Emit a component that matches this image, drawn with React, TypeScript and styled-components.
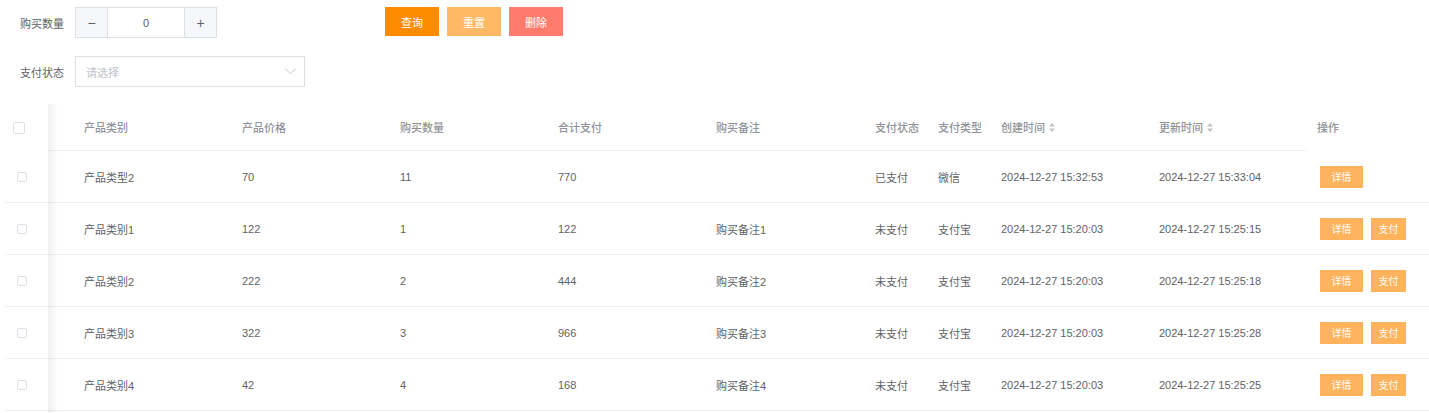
import styled, { createGlobalStyle } from 'styled-components'

const GlobalStyle = createGlobalStyle`
    html, body {
        margin: 0;
        padding: 0;
        background: #ffffff;
        overflow: hidden;
    }
    body {
        font-family: "Liberation Sans", "Noto Sans CJK SC", sans-serif;
        font-size: 11px;
        color: #606266;
    }
`

const Page = styled.div`
    width: 1429px;
    height: 413px;
    overflow: hidden;
`

const Form = styled.div`
    display: flex;
    flex-direction: column;
    gap: 18px;
    padding: 7px 0 0 20px;
`

const FormRow = styled.div`
    display: flex;
    align-items: flex-start;
`

const Field = styled.div`
    display: flex;
    align-items: center;
    height: 31px;
`

const Label = styled.label`
    width: 55px;
    color: #606266;
    font-size: 11px;
`

const NumberBox = styled.div`
    display: flex;
    width: 142px;
    height: 31px;
    box-sizing: border-box;
    border: 1px solid #dcdfe6;
    background: #ffffff;
`

const StepButton = styled.span<{ $side: 'left' | 'right' }>`
    width: 31px;
    display: flex;
    align-items: center;
    justify-content: center;
    background: #f5f7fa;
    color: #606266;
    font-size: 14px;
    ${p => p.$side === 'left' ? 'border-right: 1px solid #dcdfe6;' : 'border-left: 1px solid #dcdfe6;'}
`

const NumberValue = styled.span`
    flex: 1;
    display: flex;
    align-items: center;
    justify-content: center;
    color: #606266;
    font-size: 11px;
`

const Actions = styled.div`
    display: flex;
    gap: 8px;
    margin-left: 168px;
`

const ActionButton = styled.button<{ $color: string }>`
    width: 54px;
    height: 29px;
    border: none;
    background: ${p => p.$color};
    color: #ffffff;
    font-family: inherit;
    font-size: 11px;
    padding: 0;
    cursor: pointer;
`

const SelectBox = styled.div`
    width: 230px;
    height: 31px;
    box-sizing: border-box;
    border: 1px solid #dcdfe6;
    display: flex;
    align-items: center;
    justify-content: space-between;
    padding: 0 8px 0 10px;
    color: #c0c4cc;
    font-size: 11px;
`

const Table = styled.div`
    position: relative;
    margin: 17px 0 0 5px;

    &::after {
        content: '';
        position: absolute;
        left: 43px;
        top: 0;
        bottom: -4px;
        width: 10px;
        background: linear-gradient(to right, rgba(0, 0, 0, 0.06), rgba(0, 0, 0, 0));
        pointer-events: none;
    }
`

const columns = '43px 184px 158px 158px 158px 159px 63px 63px 158px 158px 122px'

const HeaderRow = styled.div`
    display: grid;
    grid-template-columns: ${columns};
    height: 47px;
`

const BodyRow = styled.div`
    display: grid;
    grid-template-columns: ${columns};
    height: 52px;
    box-sizing: border-box;
    border-bottom: 1px solid #ebeef5;
`

const HeadCell = styled.div<{ $lined?: boolean; $pad?: number }>`
    display: flex;
    align-items: center;
    gap: 4px;
    padding-left: ${p => p.$pad ?? 10}px;
    color: #909399;
    font-weight: 500;
    font-size: 11px;
    white-space: nowrap;
    box-sizing: border-box;
    border-bottom: ${p => p.$lined ? '1px solid #ebeef5' : '1px solid transparent'};
`

const Cell = styled.div<{ $pad?: number }>`
    display: flex;
    align-items: center;
    gap: 8px;
    padding-left: ${p => p.$pad ?? 10}px;
    color: #606266;
    font-size: 11px;
    white-space: nowrap;
`

const CheckCell = styled.div`
    display: flex;
    align-items: center;
    justify-content: center;
`

const Checkbox = styled.span<{ $size: number; $shift: number }>`
    width: ${p => p.$size}px;
    height: ${p => p.$size}px;
    box-sizing: border-box;
    border: 1px solid #dcdfe6;
    border-radius: 2px;
    background: #ffffff;
    margin-left: ${p => p.$shift}px;
`

const OpButton = styled.button<{ $wide?: boolean }>`
    width: ${p => p.$wide ? 43 : 35}px;
    height: 22px;
    border: none;
    padding: 0;
    background: #ffb35c;
    color: #ffffff;
    font-family: inherit;
    font-size: 10px;
    cursor: pointer;
`

function SortIcon() {
    return <svg width="6" height="9" viewBox="0 0 6 9">
        <path d="M3 0 L6 3.5 L0 3.5 Z" fill="#c0c4cc" />
        <path d="M3 9 L6 5.5 L0 5.5 Z" fill="#c0c4cc" />
    </svg>
}

function Chevron() {
    return <svg width="11" height="7" viewBox="0 0 11 7">
        <path d="M0.5 0.8 L5.5 5.8 L10.5 0.8" fill="none" stroke="#c0c4cc" strokeWidth="1" />
    </svg>
}

const rows = [
    { type: '产品类型2', price: 70, count: 11, total: 770, note: '', status: '已支付', pay: '微信', created: '2024-12-27 15:32:53', updated: '2024-12-27 15:33:04' },
    { type: '产品类别1', price: 122, count: 1, total: 122, note: '购买备注1', status: '未支付', pay: '支付宝', created: '2024-12-27 15:20:03', updated: '2024-12-27 15:25:15' },
    { type: '产品类别2', price: 222, count: 2, total: 444, note: '购买备注2', status: '未支付', pay: '支付宝', created: '2024-12-27 15:20:03', updated: '2024-12-27 15:25:18' },
    { type: '产品类别3', price: 322, count: 3, total: 966, note: '购买备注3', status: '未支付', pay: '支付宝', created: '2024-12-27 15:20:03', updated: '2024-12-27 15:25:28' },
    { type: '产品类别4', price: 42, count: 4, total: 168, note: '购买备注4', status: '未支付', pay: '支付宝', created: '2024-12-27 15:20:03', updated: '2024-12-27 15:25:25' },
]

export default function App() {
    return <Page>
        <GlobalStyle />
        <Form>
            <FormRow>
                <Field>
                    <Label>购买数量</Label>
                    <NumberBox>
                        <StepButton $side="left">−</StepButton>
                        <NumberValue>0</NumberValue>
                        <StepButton $side="right">+</StepButton>
                    </NumberBox>
                </Field>
                <Actions>
                    <ActionButton $color="#ff8c00">查询</ActionButton>
                    <ActionButton $color="#ffb966">重置</ActionButton>
                    <ActionButton $color="#ff7b6c">删除</ActionButton>
                </Actions>
            </FormRow>
            <FormRow>
                <Field>
                    <Label>支付状态</Label>
                    <SelectBox>
                        <span>请选择</span>
                        <Chevron />
                    </SelectBox>
                </Field>
            </FormRow>
        </Form>
        <Table>
            <HeaderRow>
                <CheckCell><Checkbox $size={12} $shift={-15} /></CheckCell>
                <HeadCell $lined $pad={36}>产品类别</HeadCell>
                <HeadCell $lined>产品价格</HeadCell>
                <HeadCell $lined>购买数量</HeadCell>
                <HeadCell $lined>合计支付</HeadCell>
                <HeadCell $lined>购买备注</HeadCell>
                <HeadCell $lined>支付状态</HeadCell>
                <HeadCell $lined>支付类型</HeadCell>
                <HeadCell $lined>创建时间 <SortIcon /></HeadCell>
                <HeadCell $lined>更新时间 <SortIcon /></HeadCell>
                <HeadCell>操作</HeadCell>
            </HeaderRow>
            {rows.map((r, i) => <BodyRow key={i}>
                <CheckCell><Checkbox $size={10} $shift={-9} /></CheckCell>
                <Cell $pad={36}>{r.type}</Cell>
                <Cell>{r.price}</Cell>
                <Cell>{r.count}</Cell>
                <Cell>{r.total}</Cell>
                <Cell>{r.note}</Cell>
                <Cell>{r.status}</Cell>
                <Cell>{r.pay}</Cell>
                <Cell>{r.created}</Cell>
                <Cell>{r.updated}</Cell>
                <Cell $pad={13}>
                    <OpButton $wide>详情</OpButton>
                    {i > 0 && <OpButton>支付</OpButton>}
                </Cell>
            </BodyRow>)}
        </Table>
    </Page>
}
